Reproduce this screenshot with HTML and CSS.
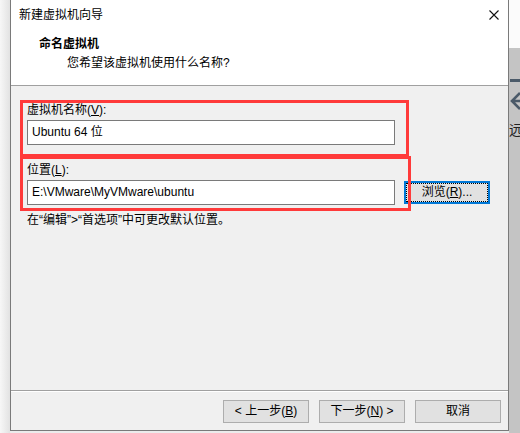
FILE: index.html
```html
<!DOCTYPE html>
<html lang="zh-CN">
<head>
<meta charset="utf-8">
<title>新建虚拟机向导</title>
<link rel="stylesheet" href="styles.css">
</head>
<body>
<div class="screen">
  <div class="shadow"></div>
  <div class="window">
    <div class="titlebar">
      <span class="title">新建虚拟机向导</span>
      <svg class="close" viewBox="0 0 10 10" width="10" height="10"><path d="M0.5 0.5 L9.5 9.5 M9.5 0.5 L0.5 9.5" stroke="#111" stroke-width="1.1" fill="none"/></svg>
    </div>
    <div class="header">
      <div class="h-title">命名虚拟机</div>
      <div class="h-sub">您希望该虚拟机使用什么名称?</div>
    </div>
    <div class="content">
      <div class="field">
        <div class="label">虚拟机名称(<u>V</u>):</div>
        <div class="input">Ubuntu 64 位</div>
      </div>
      <div class="field field-2">
        <div class="label">位置(<u>L</u>):</div>
        <div class="row">
          <div class="input">E:\VMware\MyVMware\ubuntu</div>
          <button class="btn btn-focus">浏览(<u>R</u>)...</button>
        </div>
      </div>
      <p class="hint">在“编辑”&gt;“首选项”中可更改默认位置。</p>
      <div class="mark mark-1"></div>
      <div class="mark mark-2"></div>
    </div>
    <div class="footer">
      <button class="btn">&lt; 上一步(<u>B</u>)</button>
      <button class="btn">下一步(<u>N</u>) &gt;</button>
      <button class="btn">取消</button>
    </div>
  </div>
  <div class="backdrop">
    <div class="bd-top"></div>
    <div class="bd-body">
      <span class="bd-dash"></span>
      <svg class="bd-arrow" viewBox="0 0 14 20" width="14" height="20"><path d="M11 2 L3 10 L11 18 M3 10 H16" stroke="#4b5a69" stroke-width="2.6" fill="none"/></svg>
      <span class="bd-text">远</span>
    </div>
  </div>
</div>
</body>
</html>
```
FILE: styles.css
```css
* { box-sizing: border-box; }
html, body { margin: 0; padding: 0; }
body {
  width: 520px;
  height: 433px;
  overflow: hidden;
  font-family: "Liberation Sans", "Noto Sans CJK SC", sans-serif;
  font-size: 12px;
  color: #000;
  background: #ececec;
}
.screen { display: flex; height: 433px; }
.shadow {
  width: 10px;
  flex: none;
  background: linear-gradient(to right, #f7f7f7, #e2e2e2);
}
.window {
  width: 499px;
  height: 431px;
  flex: none;
  display: flex;
  flex-direction: column;
  border: 1px solid #7a7a7a;
  border-top: none;
  background: #f0f0f0;
}
.titlebar {
  height: 30px;
  flex: none;
  display: flex;
  align-items: center;
  justify-content: space-between;
  padding: 0 9px 0 8px;
  background: #fff;
  line-height: 16px;
}
.close { display: block; }
.header {
  height: 56px;
  flex: none;
  background: #fff;
  border-bottom: 1px solid #a0a0a0;
  padding: 6px 0 0 28px;
  line-height: 16px;
}
.h-title { font-weight: bold; }
.h-sub { margin-top: 3px; padding-left: 28px; }
.content {
  flex: 1;
  position: relative;
  padding: 16px 0 0 16px;
  line-height: 16px;
}
.label { margin-bottom: 2px; }
.field-2 { margin-top: 17px; }
.input {
  width: 368px;
  height: 25px;
  border: 1px solid #7a7a7a;
  background: #fff;
  padding: 0 4px;
  line-height: 23px;
  white-space: nowrap;
}
.row { display: flex; align-items: flex-start; gap: 9px; }
.btn {
  width: 86px;
  height: 23px;
  padding: 0;
  border: 1px solid #adadad;
  background: #e1e1e1;
  font: inherit;
  color: #000;
  line-height: 19px;
}
.btn-focus {
  margin-top: 1px;
  border: 2px solid #0078d7;
  outline: 1px dotted #000;
  outline-offset: -3px;
}
.hint { margin: 7px 0 0; }
.mark {
  position: absolute;
  border: 3px solid #ff3a3a;
}
.mark-1 { left: 9px; top: 14px; width: 389px; height: 57px; }
.mark-2 { left: 9px; top: 70px; width: 391px; height: 55px; }
.footer {
  height: 40px;
  flex: none;
  display: flex;
  justify-content: flex-end;
  align-items: flex-start;
  gap: 10px;
  padding: 9px 7px 0 0;
  border-top: 1px solid #a0a0a0;
  box-shadow: inset 0 1px 0 #fff;
}
.footer .btn { line-height: 21px; }
.backdrop {
  width: 11px;
  flex: none;
  display: flex;
  flex-direction: column;
  overflow: hidden;
}
.bd-top { height: 48px; background: #fbfbfb; }
.bd-body {
  flex: 1;
  background: #c4c4c4;
  padding-top: 31px;
}
.bd-dash {
  display: block;
  width: 12px;
  height: 3px;
  background: #4b5a69;
  margin-left: 1px;
}
.bd-arrow { display: block; margin-top: 9px; }
.bd-text {
  display: block;
  margin-top: 11px;
  font-size: 14px;
  line-height: 16px;
  color: #222;
  white-space: nowrap;
}
```
